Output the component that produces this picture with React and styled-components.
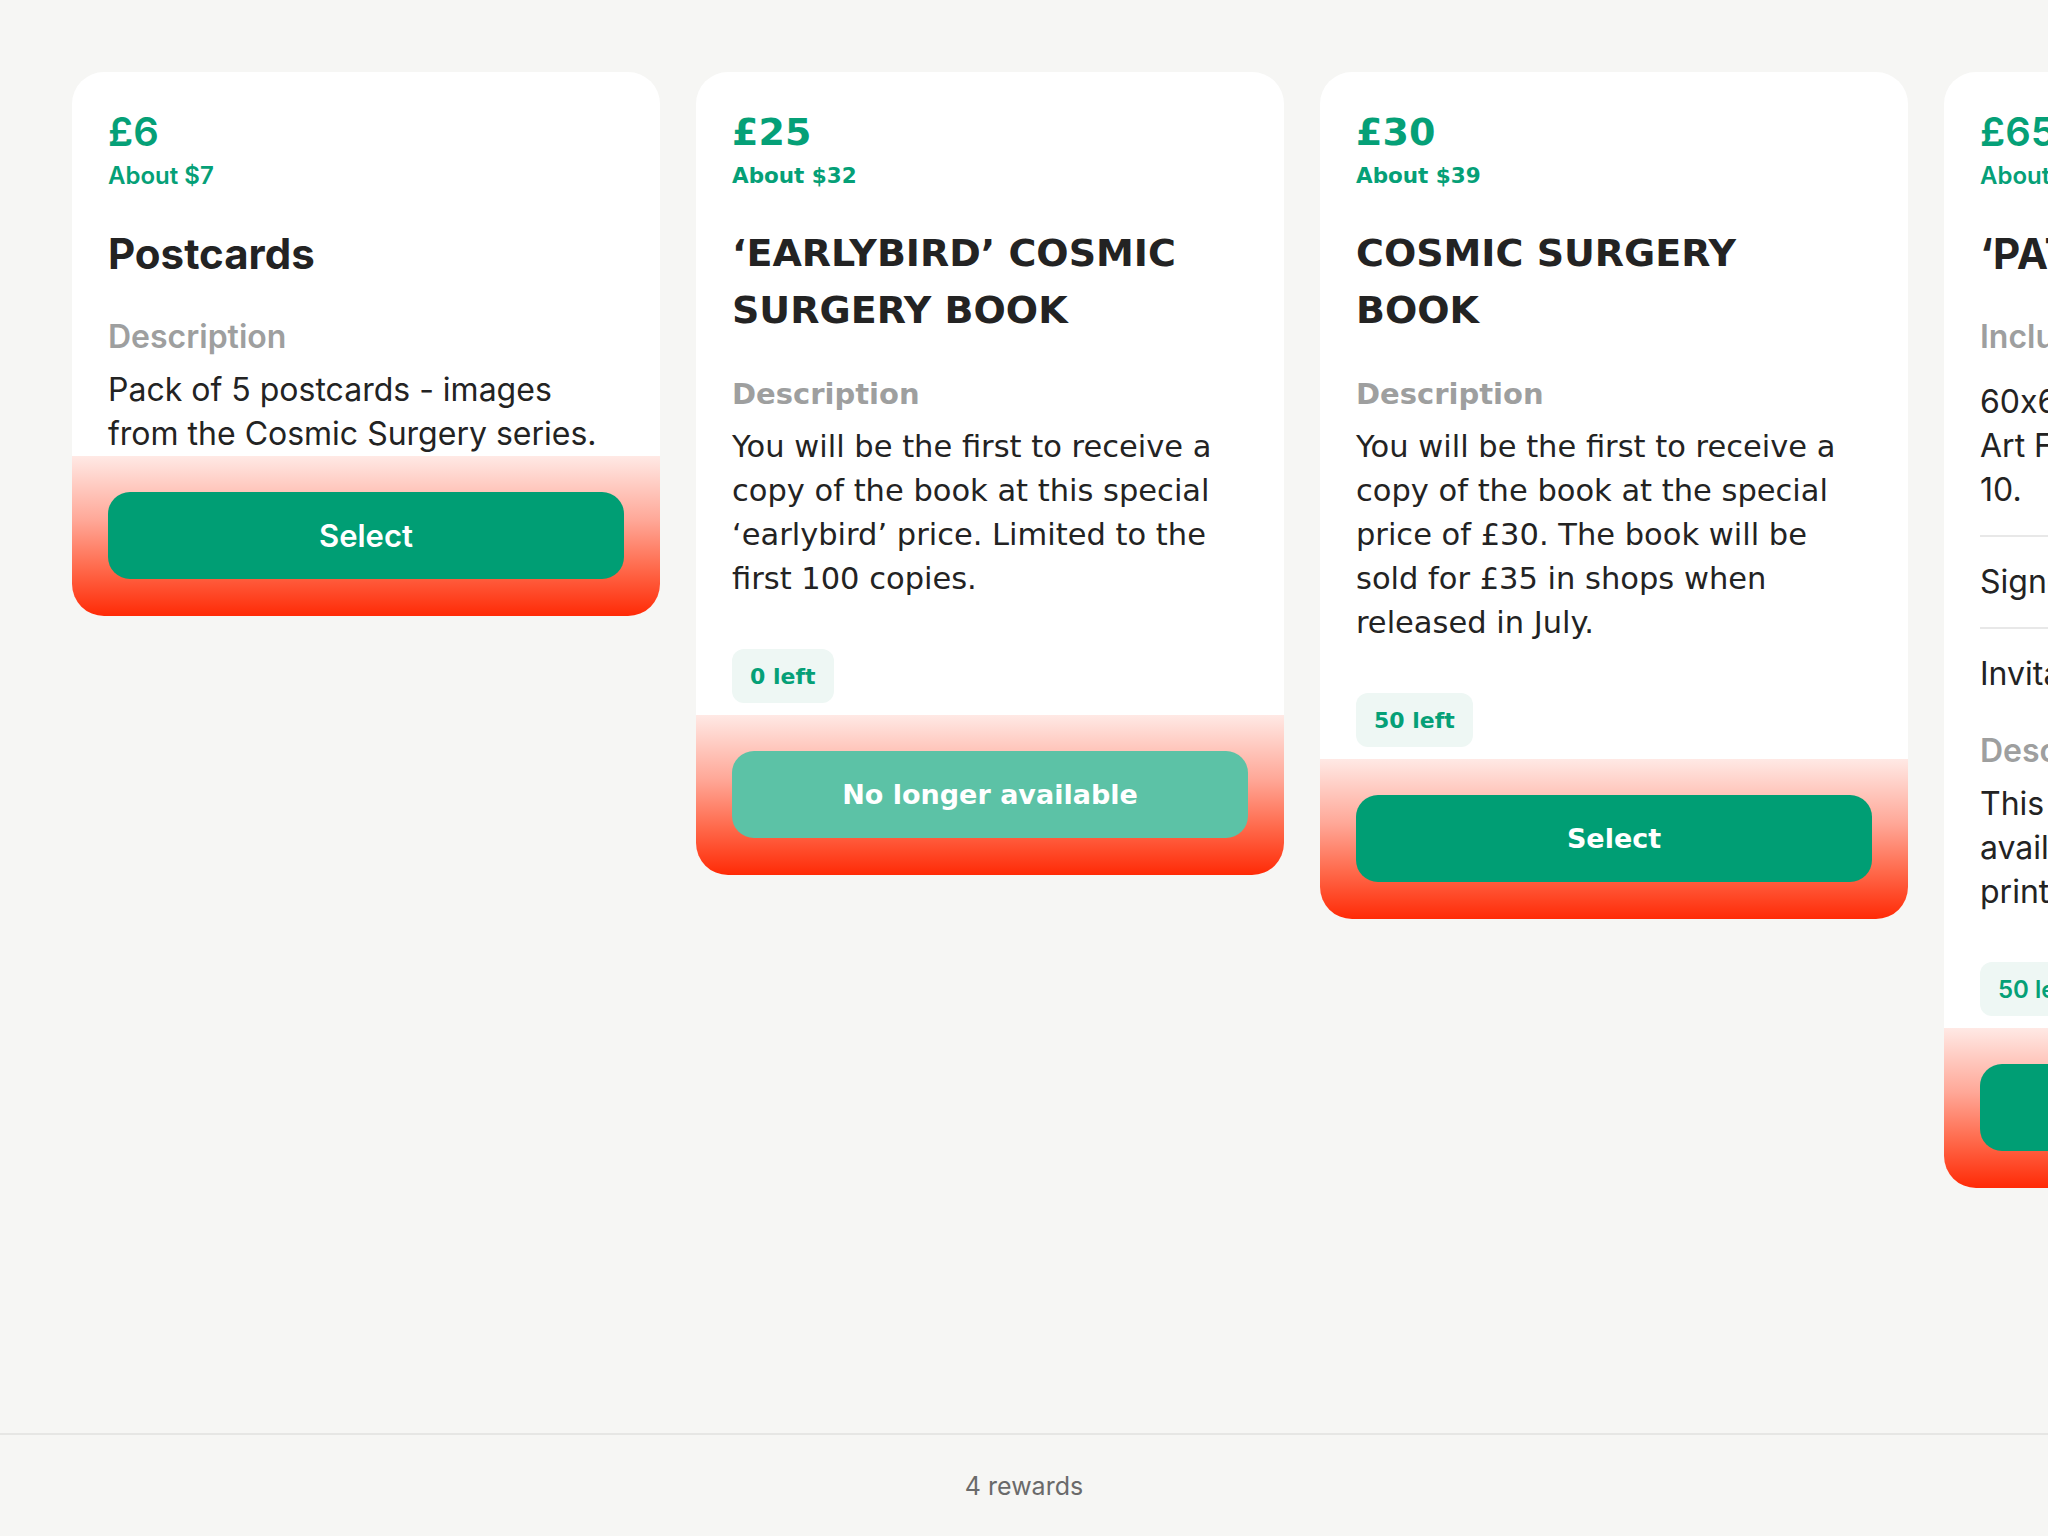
import React from 'react';
import styled, { createGlobalStyle } from 'styled-components';

const Global = createGlobalStyle`
  html, body { margin: 0; padding: 0; background: #f6f6f4; overflow: hidden; }
  #root { height: 100vh; }
  * { box-sizing: border-box; }
`;

const Page = styled.div`
  height: 100vh;
  display: flex;
  flex-direction: column;
  font-family: Inter, "Noto Sans", sans-serif;
  font-feature-settings: "calt" 0;
`;

const Scroller = styled.main`
  flex: 1;
  min-height: 0;
  overflow: hidden;
  display: flex;
  align-items: flex-start;
  gap: 36px;
  padding: 72px;
`;

const Card = styled.article`
  flex: 0 0 588px;
  background: #fff;
  border-radius: 32px;
  overflow: hidden;
  display: flex;
  flex-direction: column;
  font-family: ${(p) => (p.$wide ? '"DejaVu Sans", sans-serif' : 'Inter, "Noto Sans", sans-serif')};
  --body-size: ${(p) => (p.$wide ? '30.5px' : '32px')};
  --label-size: ${(p) => (p.$wide ? '29px' : '32px')};
  --title-size: ${(p) => (p.$wide ? '38px' : '42px')};
  --price-size: ${(p) => (p.$wide ? '38px' : '40px')};
  --about-size: ${(p) => (p.$wide ? '21.5px' : '24px')};
  --badge-size: ${(p) => (p.$wide ? '22px' : '24px')};
  --button-size: ${(p) => (p.$wide ? '27px' : '31px')};
`;

const Content = styled.div`
  padding: 36px 36px 0;
  display: flex;
  flex-direction: column;
`;

const Price = styled.div`
  color: #05a077;
  font-size: var(--price-size);
  font-weight: 600;
  line-height: 48px;
`;

const Approx = styled.div`
  margin-top: 6px;
  color: #05a077;
  font-size: var(--about-size);
  font-weight: 600;
  line-height: 28px;
`;

const Title = styled.h2`
  margin: 35px 0 0;
  font-size: var(--title-size);
  line-height: 57px;
  font-weight: 700;
  color: #232323;
`;

const Label = styled.div`
  margin-top: 33px;
  color: #9e9f9f;
  font-size: var(--label-size);
  line-height: 44px;
  font-weight: 600;
`;

const Text = styled.p`
  margin: 9px 0 0;
  font-size: var(--body-size);
  line-height: 44px;
  color: #232323;
`;

const Items = styled.ul`
  list-style: none;
  margin: 21px 0 0;
  padding: 0;
`;

const Item = styled.li`
  font-size: var(--body-size);
  line-height: 44px;
  color: #232323;
  padding: 23px 0;
  border-bottom: 2px solid #e8e8e8;
  white-space: nowrap;
  &:first-child { padding-top: 0; }
  &:last-child { padding-bottom: 0; border-bottom: 0; }
`;

const Badge = styled.span`
  align-self: flex-start;
  display: inline-flex;
  align-items: center;
  height: 54px;
  padding: 0 18px;
  margin: 48px 0 12px;
  border-radius: 12px;
  background: #eef7f4;
  color: #05a077;
  font-size: var(--badge-size);
  font-weight: 600;
`;

const Actions = styled.div`
  height: 160px;
  padding: 36px;
  background: linear-gradient(180deg, #ffe9e5 0%, #ffa898 40%, #ff6a4c 70%, #ff2a06 100%);
`;

const Button = styled.button`
  width: 100%;
  height: 87px;
  border: 0;
  border-radius: 22px;
  background: ${(p) => (p.disabled ? '#5cc2a6' : '#009e74')};
  color: #fff;
  font-family: inherit;
  font-size: var(--button-size);
  font-weight: 600;
  cursor: ${(p) => (p.disabled ? 'default' : 'pointer')};
`;

const Footer = styled.footer`
  height: 103px;
  flex: 0 0 103px;
  border-top: 2px solid #e6e6e4;
  display: flex;
  align-items: center;
  justify-content: center;
  color: #6a6a6a;
  font-size: 25px;
`;

const rewards = [
  {
    price: '£6',
    about: 'About $7',
    title: 'Postcards',
    description: 'Pack of 5 postcards - images from the Cosmic Surgery series.',
  },
  {
    wide: true,
    price: '£25',
    about: 'About $32',
    title: '‘EARLYBIRD’ COSMIC SURGERY BOOK',
    description:
      'You will be the first to receive a copy of the book at this special ‘earlybird’ price. Limited to the first 100 copies.',
    left: 0,
    unavailable: true,
  },
  {
    wide: true,
    price: '£30',
    about: 'About $39',
    title: 'COSMIC SURGERY BOOK',
    description:
      'You will be the first to receive a copy of the book at the special price of £30. The book will be sold for £35 in shops when released in July.',
    left: 50,
  },
  {
    price: '£65',
    about: 'About $85',
    title: '‘PATRON’ PRINT',
    includes: [
      ['60x60cm limited edition giclée print on', 'Art Fine paper, signed and numbered, edition of', '10.'],
      ['Signed copy of the Cosmic Surgery book'],
      ['Invitation to the book launch in London'],
    ],
    descriptionLines: ['This limited edition print is only', 'available to backers as a special', 'print for the campaign.'],
    left: 50,
  },
];

function Lines({ lines }) {
  return lines.map((l, j) => (
    <React.Fragment key={j}>
      {j > 0 && <br />}
      {l}
    </React.Fragment>
  ));
}

function RewardCard({ r }) {
  return (
    <Card $wide={r.wide}>
      <Content>
        <Price>{r.price}</Price>
        <Approx>{r.about}</Approx>
        <Title>{r.title}</Title>
        {r.includes && (
          <>
            <Label>Includes</Label>
            <Items>
              {r.includes.map((lines, i) => (
                <Item key={i}>
                  <Lines lines={lines} />
                </Item>
              ))}
            </Items>
          </>
        )}
        <Label>Description</Label>
        <Text>{r.descriptionLines ? <Lines lines={r.descriptionLines} /> : r.description}</Text>
        {r.left !== undefined && <Badge>{r.left} left</Badge>}
      </Content>
      <Actions>
        <Button disabled={r.unavailable}>{r.unavailable ? 'No longer available' : 'Select'}</Button>
      </Actions>
    </Card>
  );
}

export default function App() {
  return (
    <>
      <Global />
      <Page>
        <Scroller>
          {rewards.map((r, i) => (
            <RewardCard key={i} r={r} />
          ))}
        </Scroller>
        <Footer>4 rewards</Footer>
      </Page>
    </>
  );
}
